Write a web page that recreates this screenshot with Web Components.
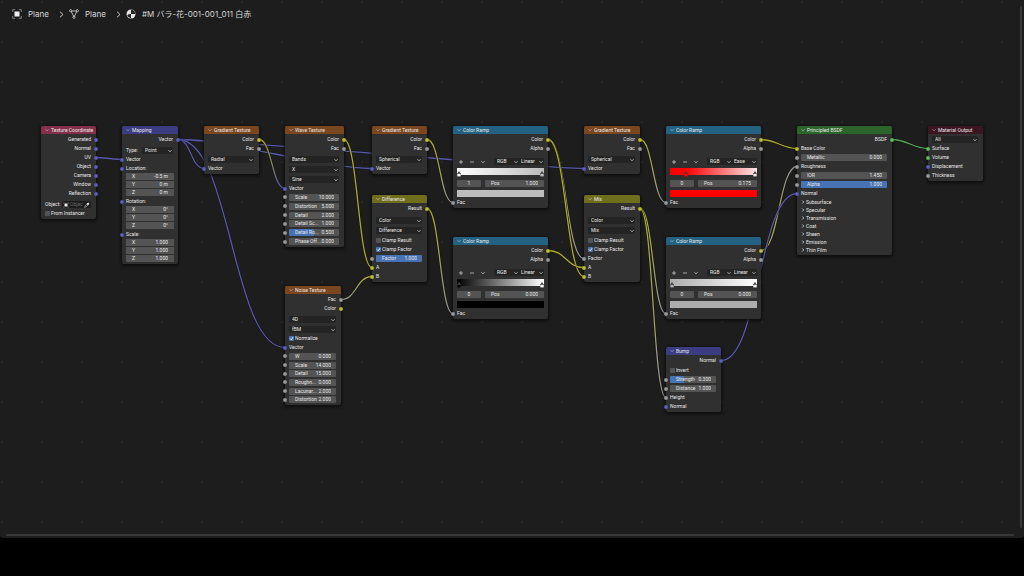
<!DOCTYPE html>
<html lang="en">
<head>
<meta charset="utf-8">
<title>Shader Editor</title>
<style>
html, body { height: 100%; margin: 0; background: #000; }
body { display: flex; flex-direction: column; font: 5px/9px Roboto, "Noto Sans CJK JP", sans-serif; color: #e8e8e8; }
</style>
</head>
<body>
<shader-editor>
  <crumb-trail slot="path">
    <crumb-item icon="object">Plane</crumb-item>
    <crumb-item icon="mesh">Plane</crumb-item>
    <crumb-item icon="material">#M バラ-花-001-001_011 白赤</crumb-item>
  </crumb-trail>

  <shader-node id="coord" caption="Texture Coordinate" tone="input" x="41" y="126" w="55">
    <node-socket out name="gen" type="vector">Generated</node-socket>
    <node-socket out name="nor" type="vector">Normal</node-socket>
    <node-socket out name="uv" type="vector">UV</node-socket>
    <node-socket out name="obj" type="vector">Object</node-socket>
    <node-socket out name="cam" type="vector">Camera</node-socket>
    <node-socket out name="win" type="vector">Window</node-socket>
    <node-socket out name="ref" type="vector">Reflection</node-socket>
    <node-object gap="2"></node-object>
    <node-check>From Instancer</node-check>
  </shader-node>

  <shader-node id="map" caption="Mapping" tone="vector" x="122" y="126" w="56">
    <node-socket out name="vec" type="vector">Vector</node-socket>
    <node-menu label="Type:" value="Point" gap="2"></node-menu>
    <node-socket name="vin" type="vector">Vector</node-socket>
    <node-socket name="loc" type="vector">Location:</node-socket>
    <node-triple x="-0.5 m" y="0 m" z="0 m"></node-triple>
    <node-socket name="rot" type="vector">Rotation:</node-socket>
    <node-triple x="0°" y="0°" z="0°"></node-triple>
    <node-socket name="scl" type="vector">Scale:</node-socket>
    <node-triple x="1.000" y="1.000" z="1.000"></node-triple>
  </shader-node>

  <shader-node id="grad1" caption="Gradient Texture" tone="texture" x="204" y="126" w="55">
    <node-socket out name="color" type="color">Color</node-socket>
    <node-socket out name="fac" type="value">Fac</node-socket>
    <node-menu value="Radial" gap="2"></node-menu>
    <node-socket name="vec" type="vector">Vector</node-socket>
  </shader-node>

  <shader-node id="wave" caption="Wave Texture" tone="texture" x="285" y="126" w="59">
    <node-socket out name="color" type="color">Color</node-socket>
    <node-socket out name="fac" type="value">Fac</node-socket>
    <node-menu value="Bands" gap="2"></node-menu>
    <node-menu value="X" gap="1"></node-menu>
    <node-menu value="Sine" gap="1"></node-menu>
    <node-socket name="vec" type="vector">Vector</node-socket>
    <node-stack tall="53">
      <node-number label="Scale" value="10.000"></node-number>
      <node-number label="Distortion" value="5.000"></node-number>
      <node-number label="Detail" value="2.000"></node-number>
      <node-number label="Detail Sc..." value="1.000"></node-number>
      <node-number label="Detail Ro..." value="0.500" fill="50"></node-number>
      <node-number label="Phase Off..." value="0.000"></node-number>
    </node-stack>
  </shader-node>

  <shader-node id="grad2" caption="Gradient Texture" tone="texture" x="372" y="126" w="55">
    <node-socket out name="color" type="color">Color</node-socket>
    <node-socket out name="fac" type="value">Fac</node-socket>
    <node-menu value="Spherical" gap="2"></node-menu>
    <node-socket name="vec" type="vector">Vector</node-socket>
  </shader-node>

  <shader-node id="ramp1" caption="Color Ramp" tone="convert" x="453" y="126" w="95">
    <node-socket out name="color" type="color">Color</node-socket>
    <node-socket out name="alpha" type="value">Alpha</node-socket>
    <color-ramp mode="Linear" from="#ffffff" to="#bdbdbd" start="0" index="1" pos="1.000" pick="#bdbdbd"></color-ramp>
    <node-socket name="fin" type="value">Fac</node-socket>
  </shader-node>

  <shader-node id="diff" caption="Difference" tone="color" x="372" y="195" w="55">
    <node-socket out name="res" type="color">Result</node-socket>
    <node-menu value="Color" gap="3"></node-menu>
    <node-menu value="Difference" gap="1"></node-menu>
    <node-check gap="1">Clamp Result</node-check>
    <node-check on>Clamp Factor</node-check>
    <node-number label="Factor" value="1.000" fill="100"></node-number>
    <node-socket name="a" type="color">A</node-socket>
    <node-socket name="b" type="color">B</node-socket>
  </shader-node>

  <shader-node id="ramp2" caption="Color Ramp" tone="convert" x="453" y="237" w="95">
    <node-socket out name="color" type="color">Color</node-socket>
    <node-socket out name="alpha" type="value">Alpha</node-socket>
    <color-ramp mode="Linear" from="#000000" to="#ffffff" start="0" index="0" pos="0.000" pick="#000000"></color-ramp>
    <node-socket name="fin" type="value">Fac</node-socket>
  </shader-node>

  <shader-node id="noise" caption="Noise Texture" tone="texture" x="285" y="286" w="56">
    <node-socket out name="fac" type="value">Fac</node-socket>
    <node-socket out name="color" type="color">Color</node-socket>
    <node-menu value="4D" gap="2"></node-menu>
    <node-menu value="fBM" gap="1"></node-menu>
    <node-check on>Normalize</node-check>
    <node-socket name="vec" type="vector">Vector</node-socket>
    <node-stack tall="52">
      <node-number label="W" value="0.000"></node-number>
      <node-number label="Scale" value="14.000"></node-number>
      <node-number label="Detail" value="15.000"></node-number>
      <node-number label="Roughn..." value="0.000"></node-number>
      <node-number label="Lacunar..." value="2.000"></node-number>
      <node-number label="Distortion" value="2.000"></node-number>
    </node-stack>
  </shader-node>

  <shader-node id="grad3" caption="Gradient Texture" tone="texture" x="584" y="126" w="56">
    <node-socket out name="color" type="color">Color</node-socket>
    <node-socket out name="fac" type="value">Fac</node-socket>
    <node-menu value="Spherical" gap="2"></node-menu>
    <node-socket name="vec" type="vector">Vector</node-socket>
  </shader-node>

  <shader-node id="ramp3" caption="Color Ramp" tone="convert" x="666" y="126" w="95">
    <node-socket out name="color" type="color">Color</node-socket>
    <node-socket out name="alpha" type="value">Alpha</node-socket>
    <color-ramp mode="Ease" from="#ff0000" to="#ffe6e6" start="18" index="0" pos="0.175" pick="#ff0000"></color-ramp>
    <node-socket name="fin" type="value">Fac</node-socket>
  </shader-node>

  <shader-node id="mix" caption="Mix" tone="color" x="584" y="195" w="56">
    <node-socket out name="res" type="color">Result</node-socket>
    <node-menu value="Color" gap="3"></node-menu>
    <node-menu value="Mix" gap="1"></node-menu>
    <node-check gap="1">Clamp Result</node-check>
    <node-check on>Clamp Factor</node-check>
    <node-socket name="fin" type="value">Factor</node-socket>
    <node-socket name="a" type="color">A</node-socket>
    <node-socket name="b" type="color">B</node-socket>
  </shader-node>

  <shader-node id="ramp4" caption="Color Ramp" tone="convert" x="666" y="237" w="95">
    <node-socket out name="color" type="color">Color</node-socket>
    <node-socket out name="alpha" type="value">Alpha</node-socket>
    <color-ramp mode="Linear" from="#adadad" to="#ffffff" start="0" index="0" pos="0.000" pick="#adadad"></color-ramp>
    <node-socket name="fin" type="value">Fac</node-socket>
  </shader-node>

  <shader-node id="bump" caption="Bump" tone="vector" x="666" y="347" w="55">
    <node-socket out name="nor" type="vector">Normal</node-socket>
    <node-check gap="1">Invert</node-check>
    <node-number label="Strength" value="0.300" fill="30"></node-number>
    <node-number label="Distance" value="1.000"></node-number>
    <node-socket name="height" type="value">Height</node-socket>
    <node-socket name="nin" type="vector">Normal</node-socket>
  </shader-node>

  <shader-node id="bsdf" caption="Principled BSDF" tone="shader" x="797" y="126" w="95">
    <node-socket out name="out" type="shader">BSDF</node-socket>
    <node-socket name="base" type="color">Base Color</node-socket>
    <node-number label="Metallic" value="0.000"></node-number>
    <node-socket name="rough" type="value">Roughness</node-socket>
    <node-number label="IOR" value="1.450"></node-number>
    <node-number label="Alpha" value="1.000" fill="100"></node-number>
    <node-socket name="nor" type="vector">Normal</node-socket>
    <node-panel>Subsurface</node-panel>
    <node-panel>Specular</node-panel>
    <node-panel>Transmission</node-panel>
    <node-panel>Coat</node-panel>
    <node-panel>Sheen</node-panel>
    <node-panel>Emission</node-panel>
    <node-panel>Thin Film</node-panel>
  </shader-node>

  <shader-node id="output" caption="Material Output" tone="output" x="928" y="126" w="55">
    <node-menu value="All" gap="1"></node-menu>
    <node-socket name="surf" type="shader">Surface</node-socket>
    <node-socket name="vol" type="shader">Volume</node-socket>
    <node-socket name="disp" type="vector">Displacement</node-socket>
    <node-socket name="thick" type="value">Thickness</node-socket>
  </shader-node>
</shader-editor>

<script>
const SOCKET = { color: '#c7c729', value: '#a1a1a1', vector: '#6363c7', shader: '#63c763' };
const WIRE = { color: '#adad26', value: '#949494', vector: '#5858ac', shader: '#54aa54' };
const TONE = { input: '#83314a', vector: '#3c3c83', texture: '#79461d', convert: '#246283', color: '#6e6e1d', shader: '#2b652b', output: '#3b1620' };
const LINKS = [
  ['coord.uv', 'map.vin'], ['map.vec', 'grad1.vec'], ['map.vec', 'grad2.vec'], ['map.vec', 'grad3.vec'], ['map.vec', 'noise.vec'],
  ['grad1.color', 'wave.vec'], ['wave.color', 'diff.a'], ['noise.fac', 'diff.b'], ['grad2.color', 'ramp1.fin'],
  ['diff.res', 'ramp2.fin'], ['ramp1.color', 'mix.fin'], ['ramp1.color', 'mix.b'], ['ramp2.color', 'mix.a'],
  ['grad3.color', 'ramp3.fin'], ['mix.res', 'ramp4.fin'], ['mix.res', 'bump.height'],
  ['ramp3.color', 'bsdf.base'], ['ramp4.color', 'bsdf.rough'], ['bump.nor', 'bsdf.nor'], ['bsdf.out', 'output.surf']
];
const CHEVRON = '<svg class="chev" viewBox="0 0 8 8" aria-hidden="true"><path d="M1 2.5 4 5.5 7 2.5" fill="none" stroke="currentColor" stroke-width="1.5"/></svg>';
const BASE = `
  :host, * { box-sizing: border-box; }
  :host { display: block; }
  :host([gap="1"]) { margin-top: 1px; }
  :host([gap="2"]) { margin-top: 2px; }
  :host([gap="3"]) { margin-top: 3px; }
  input, select, button { font: inherit; color: inherit; margin: 0; padding: 0; border: 0; border-radius: 1px; outline: 0; background: none; appearance: none; min-width: 0; }
  .chev { width: 4px; height: 4px; flex: none; }
  .pick { display: grid; align-items: center; height: 7px; background: #242424; border-radius: 1px; }
  .pick > * { grid-area: 1 / 1; }
  .pick .chev { justify-self: end; margin-right: 1px; pointer-events: none; }
  .pick select { width: 100%; height: 7px; line-height: 7px; padding-left: 3px; }
`;
class Part extends HTMLElement {
  connectedCallback() {
    if (this.shadowRoot) return;
    this.attachShadow({ mode: 'open' }).innerHTML = `<style>${BASE}${this.css()}</style>${this.view()}`;
  }
  css() { return ''; }
  view() { return '<slot></slot>'; }
  at(name) { return this.getAttribute(name) ?? ''; }
}

customElements.define('crumb-trail', class extends Part {
  css() { return ':host { display: flex; align-items: center; font: 8px/10px Inter, "Noto Sans CJK JP", sans-serif; color: #d8d8d8; }'; }
});

customElements.define('crumb-item', class extends Part {
  css() { return `
    :host { display: flex; align-items: center; }
    .pic { width: 10px; height: 10px; margin-right: 6px; }
    .sep { width: 5px; height: 7px; margin: 0 5px 0 10px; }
    :host(:last-child) .sep { display: none; }
    a { color: inherit; text-decoration: none; white-space: nowrap; }`; }
  view() {
    const icons = {
      object: '<rect x="2.5" y="2.5" width="5" height="5" fill="#f0f0f0"/><path d="M.7 3V.7H3M7 .7h2.3V3M9.3 7v2.3H7M3 9.3H.7V7" fill="none" stroke="#999" stroke-width=".8"/>',
      mesh: '<path d="M2 2H8L5 8Z" fill="none" stroke="#c4c4c4" stroke-width=".9"/><g fill="#1d1d1d" stroke="#d8d8d8" stroke-width=".8"><circle cx="1.7" cy="1.7" r="1.1"/><circle cx="8.3" cy="1.7" r="1.1"/><circle cx="5" cy="8.3" r="1.1"/></g>',
      material: '<circle cx="5" cy="5" r="4.5" fill="#e4e4e4"/><path d="M5 .8V5H9.2A4.2 4.2 0 0 0 5 .8Z" fill="#222"/><path d="M1.2 6.2Q3.200 4.600 5 5V9.200A4.200 4.200 0 0 1 1.200 6.200Z" fill="#222"/>'
    };
    return `<svg class="pic" viewBox="0 0 10 10" aria-hidden="true">${icons[this.at('icon')]}</svg><a href="#"><slot></slot></a>
      <svg class="sep" viewBox="0 0 5 7" aria-hidden="true"><path d="M1 .7 4 3.5 1 6.3" fill="none" stroke="#c8c8c8" stroke-width="1"/></svg>`;
  }
});

customElements.define('shader-node', class extends Part {
  css() { return `
    :host { position: absolute; left: ${this.at('x')}px; top: ${this.at('y')}px; width: ${this.at('w')}px; padding-bottom: 1px;
      background: #303030; border-radius: 2px; box-shadow: 0 1px 3px 1px #0a0a0acc; }
    header { display: flex; align-items: center; gap: 2px; height: 8px; margin-bottom: 1px; padding-left: 4px; border-radius: 2px 2px 0 0;
      background: ${TONE[this.at('tone')]}; white-space: nowrap; }
    header .chev { opacity: .7; }
    h2 { margin: 0; font: inherit; line-height: 8px; }`; }
  view() { return `<header>${CHEVRON}<h2>${this.at('caption')}</h2></header><slot></slot>`; }
});

const dot = (type, side) => `.dot { position: absolute; ${side}: -2px; top: 50%; margin-top: -2px; width: 4px; height: 4px; border-radius: 50%; background: ${SOCKET[type]}; border: 1px solid #0002; }`;

customElements.define('node-socket', class extends Part {
  css() {
    const out = this.hasAttribute('out');
    return `:host { position: relative; height: 9px; padding: 0 5px 0 4px; text-align: ${out ? 'right' : 'left'}; white-space: nowrap; }
      ${dot(this.at('type'), out ? 'right' : 'left')}`;
  }
  view() { return '<slot></slot><i class="dot"></i>'; }
});

customElements.define('node-menu', class extends Part {
  css() { return `
    :host { height: 9px; padding: 1px 5px 1px 4px; }
    label { display: grid; grid-template-columns: auto 1fr; align-items: center; height: 7px; }
    label > span:first-child:not(.pick) { width: 16px; line-height: 7px; }
    .pick:only-child { grid-column: 1 / -1; }`; }
  view() {
    const l = this.at('label');
    return `<label>${l ? `<span>${l}</span>` : ''}<span class="pick"><select aria-label="${l || this.at('value')}"><option>${this.at('value')}</option></select>${CHEVRON}</span></label>`;
  }
});

customElements.define('node-stack', class extends Part {
  css() { return `:host { display: grid; grid-auto-rows: 1fr; height: ${this.at('tall')}px; --row: auto; }`; }
});

customElements.define('node-number', class extends Part {
  css() {
    const f = this.at('fill') || 0;
    return `
    :host { position: relative; height: var(--row, 9px); min-height: 0; padding: 1px 5px 0 4px; }
    label { display: flex; align-items: center; justify-content: space-between; height: 7px; line-height: 7px; padding: 0 5px 0 6px; border-radius: 1px; white-space: nowrap;
      background: linear-gradient(90deg, #4772b3 ${f}%, #545454 ${f}%); }
    input { width: 16px; height: 7px; text-align: right; flex: none; }
    label span { flex: 1; width: 0; }
    ${dot('value', 'left')}`;
  }
  view() { return `<label><span>${this.at('label')}</span><input value="${this.at('value')}"></label><i class="dot"></i>`; }
});

customElements.define('node-triple', class extends Part {
  css() { return `
    :host { display: grid; gap: 1px; height: 24px; padding: 0 4px 1px 4px; }
    label { display: flex; align-items: center; background: #545454; padding: 0 6px; line-height: 7px; height: 7px; }
    span { flex: 1; }
    input { width: 24px; height: 7px; text-align: right; }`; }
  view() { return ['x', 'y', 'z'].map(k => `<label><span>${k.toUpperCase()}</span><input value="${this.at(k)}"></label>`).join(''); }
});

customElements.define('node-check', class extends Part {
  css() { return `
    :host { height: 9px; padding-left: 4px; }
    label { display: flex; align-items: center; gap: 1px; height: 9px; white-space: nowrap; }
    input { width: 5px; height: 5px; background: #545454; flex: none; }
    input:checked { background: #4772b3 url('data:image/svg+xml,<svg xmlns="http://www.w3.org/2000/svg" viewBox="0 0 10 10"><path d="M2 5l2.5 2.5L8 2.5" fill="none" stroke="white" stroke-width="1.8"/></svg>'); }`; }
  view() { return `<label><input type="checkbox" ${this.hasAttribute('on') ? 'checked' : ''}><slot></slot></label>`; }
});

customElements.define('node-object', class extends Part {
  css() { return `
    :host { height: 9px; padding: 1px 5px 1px 4px; }
    label { display: flex; align-items: center; height: 7px; line-height: 7px; }
    label > span:first-child { width: 17px; flex: none; }
    .box { flex: 1; display: flex; align-items: center; gap: 1px; height: 7px; padding: 0 1px; background: #1d1d1d; border-radius: 1px; }
    svg { width: 6px; height: 6px; flex: none; }
    input { flex: 1; width: 0; height: 7px; }
    input::placeholder { color: #666; opacity: 1; }`; }
  view() { return `<label><span>Object:</span><span class="box">
    <svg viewBox="0 0 10 10" aria-hidden="true"><rect x="2.5" y="2.5" width="5" height="5" fill="#eee"/><path d="M.7 3V.7H3M7 .7h2.3V3M9.3 7v2.3H7M3 9.3H.7V7" fill="none" stroke="#777" stroke-width=".8"/></svg>
    <input placeholder="Object"><svg viewBox="0 0 10 10" aria-hidden="true"><path d="M1 9 1.5 7 5.5 3 7 4.500 3 8.500Z" fill="none" stroke="#ccc" stroke-width="1"/><path d="M5 2.500 7.500 5M6.200 3.800 8.500 1.500" stroke="#ddd" stroke-width="2"/></svg></span></label>`; }
});

customElements.define('node-panel', class extends Part {
  css() { return `
    :host { height: 8px; padding-left: 4px; }
    button { display: flex; align-items: center; gap: 1px; height: 8px; line-height: 8px; }
    .chev { transform: rotate(-90deg); }`; }
  view() { return `<button>${CHEVRON}<slot></slot></button>`; }
});

customElements.define('color-ramp', class extends Part {
  css() {
    const s = +this.at('start'), a = this.at('from'), b = this.at('to');
    return `
    :host { padding: 4px 4px 1px 4px; }
    .bar { display: flex; align-items: center; height: 9px; }
    .bar button { width: 11px; height: 9px; display: grid; place-items: center; padding-right: 3px; }
    .bar svg { width: 4px; height: 4px; }
    .bar .pick { flex: 0 0 25px; }
    .bar .pick:last-child select { padding-left: 2px; }
    .bar i { flex: 1; }
    .ramp { position: relative; height: 7px; margin-top: 2px; background: linear-gradient(90deg, ${a} ${s}%, ${b}); }
    .stop { position: absolute; top: 3px; width: 4px; height: 6px; margin-left: -2px; }
    .row { display: grid; grid-template-columns: 24px 1fr; gap: 4px; margin: 5px 0 3px; }
    .row label, .row > input { display: flex; height: 7px; line-height: 7px; background: #545454; border-radius: 1px; }
    .row > input { width: 24px; text-align: center; }
    .row label { padding: 0 6px; }
    .row label span { flex: 1; }
    .row label input { width: 24px; height: 7px; text-align: right; }
    .swatch { display: block; width: 100%; height: 7px; background: ${this.at('pick')}; border-radius: 0; }`;
  }
  view() {
    const s = +this.at('start');
    const stop = (pos, c) => `<svg class="stop" style="left:${pos}%" viewBox="0 0 4 6" aria-hidden="true"><path d="M0 3 2 0 4 3Z" fill="#444"/><rect x="0" y="2.5" width="4" height="3.2" fill="#333"/><rect x=".3" y="2.8" width="3.4" height="2.6" fill="${c}"/></svg>`;
    return `<div class="bar">
      <button aria-label="Add stop"><svg viewBox="0 0 8 8"><path d="M4 0V8M0 4H8" stroke="#ccc" stroke-width="1.5"/></svg></button>
      <button aria-label="Remove stop"><svg viewBox="0 0 8 8"><path d="M0 4H8" stroke="#ccc" stroke-width="1.5"/></svg></button>
      <button aria-label="Tools">${CHEVRON}</button><i></i>
      <span class="pick"><select aria-label="Color mode"><option>RGB</option></select>${CHEVRON}</span>
      <span class="pick"><select aria-label="Interpolation"><option>${this.at('mode')}</option></select>${CHEVRON}</span></div>
      <div class="ramp">${stop(s || 2, this.at('from'))}${stop(98, this.at('to'))}</div>
      <div class="row"><input aria-label="Stop" value="${this.at('index')}"><label><span>Pos</span><input value="${this.at('pos')}"></label></div>
      <button class="swatch" aria-label="Stop color"></button>`;
  }
});

customElements.define('shader-editor', class extends Part {
  css() { return `
    :host { position: relative; display: grid; grid-template: auto 1fr 10px / 1fr 6px; flex: 1; margin-bottom: 38px; border-radius: 0 0 3px 3px; overflow: hidden;
      background: radial-gradient(circle, #262626 1px, transparent 1px) -18px -18px / 40px 40px #1d1d1d; }
    .path { grid-area: 1 / 1; padding: 9px 12px; }
    .wires { position: absolute; inset: 0; width: 100%; height: 100%; pointer-events: none; }
    .v { grid-area: 1 / 2 / 3 / 3; width: 2px; margin: 6px 0 0 2px; background: #383838; border-radius: 1px; }
    .h { grid-area: 3 / 1; height: 2px; margin: 6px 4px 0 6px; background: #383838; border-radius: 1px; }`; }
  view() { return `<svg class="wires" aria-hidden="true"></svg><div class="path"><slot name="path"></slot></div><div class="v"></div><div class="h"></div><slot></slot>`; }
  wire() {
    const box = this.getBoundingClientRect();
    const find = ref => {
      const [n, s] = ref.split('.');
      const el = this.querySelector(`#${n} [name="${s}"]`);
      const r = el.shadowRoot.querySelector('.dot').getBoundingClientRect();
      return { x: r.left + r.width / 2 - box.left, y: r.top + r.height / 2 - box.top, c: WIRE[el.getAttribute('type')] };
    };
    let defs = '', paths = '';
    LINKS.forEach(([from, to], i) => {
      const a = find(from), b = find(to), dx = b.x - a.x, slope = Math.abs((b.y - a.y) / dx);
      const h = .5 * dx * Math.min(1, slope * 3.25);
      const d = `M${a.x} ${a.y}C${a.x + h} ${a.y} ${b.x - h} ${b.y} ${b.x} ${b.y}`;
      defs += `<linearGradient id="g${i}" gradientUnits="userSpaceOnUse" x1="${a.x}" y1="${a.y}" x2="${b.x}" y2="${b.y}"><stop stop-color="${a.c}"/><stop offset="1" stop-color="${b.c}"/></linearGradient>`;
      paths += `<path d="${d}" stroke="#111" stroke-width="2.2"/><path d="${d}" stroke="url(#g${i})" stroke-width="1.3"/>`;
    });
    this.shadowRoot.querySelector('.wires').innerHTML = `<defs>${defs}</defs><g fill="none">${paths}</g>`;
  }
});
document.querySelector('shader-editor').wire();
</script>
</body>
</html>
